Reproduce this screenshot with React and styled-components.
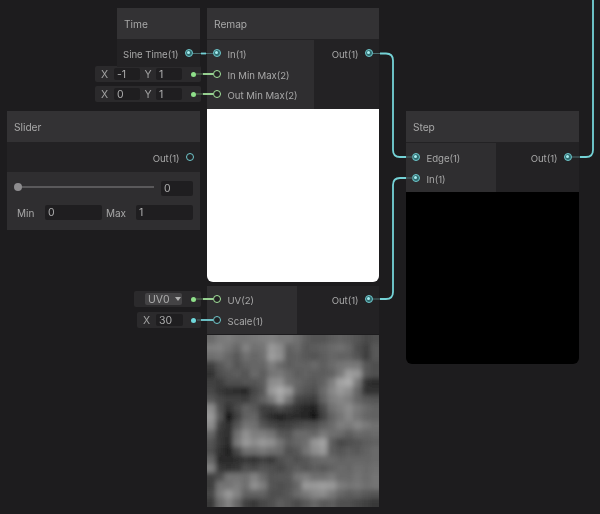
import React from "react";
import styled, { createGlobalStyle } from "styled-components";

const Global = createGlobalStyle`
  html, body { margin: 0; padding: 0; background: #1d1c1e; }
  body { font-family: Inter, "Liberation Sans", sans-serif; }
`;
const Canvas = styled.div`
  position: relative;
  width: 600px;
  height: 514px;
  overflow: hidden;
  background: #1d1c1e;
  filter: blur(0.35px);
`;
const Node = styled.div`
  position: absolute;
  left: ${(p) => p.$x}px;
  top: ${(p) => p.$y}px;
  width: ${(p) => p.$w}px;
  display: flex;
  flex-direction: column;
  color: #a8a8a8;
  font-size: 9.6px;
  letter-spacing: -0.03px;
  white-space: nowrap;
`;
const Title = styled.div`
  height: 31px;
  line-height: 33px;
  padding-left: 7px;
  font-size: 10.2px;
  background: #333234;
  border-bottom: 1px solid #232224;
`;
const Ports = styled.div`
  display: flex;
  height: ${(p) => p.$h}px;
  background: #232224;
`;
const PortColumn = styled.div`
  width: ${(p) => p.$w}px;
  padding-top: ${(p) => p.$top || 3}px;
  box-sizing: border-box;
  background: ${(p) => (p.$input ? "#2f2e30" : "#232224")};
  display: flex;
  flex-direction: column;
  align-items: ${(p) => (p.$input ? "flex-start" : "flex-end")};
`;
const PortRow = styled.div`
  height: 20.5px;
  display: flex;
  align-items: center;
  gap: 6.5px;
  padding: ${(p) => (p.$input ? "0 0 0 6px" : `0 ${p.$pad || 6}px 0 0`)};
`;
const PortLabel = styled.span`
  margin-top: 3px;
`;
const Port = styled.span`
  width: 8px;
  height: 8px;
  border-radius: 50%;
  box-sizing: border-box;
  flex: none;
  border: 1.5px solid ${(p) => p.$color};
  background: ${(p) => (p.$open ? "#222123" : "#2f6a6e")};
  position: relative;
  &::after {
    content: "";
    display: ${(p) => (p.$open ? "none" : "block")};
    position: absolute;
    left: 1px;
    top: 1px;
    width: 3px;
    height: 3px;
    border-radius: 50%;
    background: #a6eef0;
  }
`;
const Preview = styled.div`
  height: ${(p) => p.$h}px;
  background: ${(p) => p.$bg};
  border-radius: 0 0 6px 6px;
`;
const NoiseFrame = styled.div`
  margin-top: 1px;
  height: 172px;
  overflow: hidden;
`;
const InlineControl = styled.div`
  position: absolute;
  left: ${(p) => p.$x}px;
  top: ${(p) => p.$y}px;
  width: ${(p) => p.$w}px;
  height: 16px;
  background: #2b2a2c;
  border-radius: 2px;
  display: flex;
  align-items: center;
  font-size: 10.5px;
  color: #a0a0a0;
`;
const Axis = styled.span`
  width: ${(p) => p.$w}px;
  text-align: ${(p) => p.$align || "center"};
  padding-left: ${(p) => p.$indent || 0}px;
  box-sizing: border-box;
  flex: none;
`;
const Field = styled.span`
  width: ${(p) => p.$w}px;
  height: ${(p) => p.$h || 12}px;
  line-height: ${(p) => (p.$h || 12) + 1}px;
  padding-left: 3px;
  box-sizing: border-box;
  background: #1f1e20;
  border-radius: 2px;
  flex: none;
  font-size: 10.5px;
  color: #acacac;
`;
const Dot = styled.span`
  position: absolute;
  right: 5px;
  top: 5.5px;
  width: 5px;
  height: 5px;
  border-radius: 50%;
  background: ${(p) => p.$color};
`;
const Dropdown = styled.span`
  margin-left: 11px;
  width: 37px;
  height: 12px;
  padding-left: 3px;
  box-sizing: border-box;
  background: #444345;
  border-radius: 2px;
  display: flex;
  align-items: center;
  gap: 5px;
  color: #acacac;
`;
const Caret = styled.span`
  width: 0;
  height: 0;
  border-left: 3px solid transparent;
  border-right: 3px solid transparent;
  border-top: 4px solid #b0b0b0;
`;
const SliderBody = styled.div`
  background: #2f2e30;
  height: 58px;
  padding: 9px 7px 0 10px;
  box-sizing: border-box;
  display: flex;
  flex-direction: column;
  gap: 9px;
`;
const SliderRow = styled.div`
  display: flex;
  align-items: center;
  height: 15px;
  font-size: 10px;
`;
const Track = styled.div`
  position: relative;
  width: 136px;
  height: 2px;
  background: #5a595b;
  margin: 0 7px 3px 1px;
`;
const Thumb = styled.span`
  position: absolute;
  left: -4px;
  top: -3px;
  width: 8px;
  height: 8px;
  border-radius: 50%;
  background: #8e8d8f;
`;
const Wires = styled.svg`
  position: absolute;
  inset: 0;
  pointer-events: none;
`;

const NOISE = [
  [115, 130, 135, 125, 125, 130, 135, 140, 130, 130, 120, 100, 90, 90, 100, 105, 100, 90, 80, 85],
  [135, 140, 125, 110, 140, 120, 125, 165, 150, 105, 115, 95, 100, 105, 115, 120, 110, 85, 70, 95],
  [120, 125, 110, 95, 120, 110, 120, 170, 155, 100, 105, 95, 90, 100, 110, 105, 105, 90, 65, 95],
  [70, 95, 110, 90, 105, 110, 110, 135, 115, 100, 105, 105, 115, 100, 115, 125, 130, 130, 95, 85],
  [55, 85, 95, 100, 90, 115, 100, 125, 130, 115, 100, 105, 100, 100, 105, 130, 170, 165, 95, 85],
  [70, 65, 85, 85, 90, 90, 100, 150, 155, 120, 110, 100, 95, 105, 135, 175, 185, 130, 55, 45],
  [75, 60, 50, 45, 40, 75, 95, 165, 185, 165, 105, 90, 85, 115, 145, 165, 150, 110, 55, 55],
  [95, 75, 70, 70, 65, 85, 105, 130, 170, 125, 75, 70, 65, 105, 135, 145, 135, 110, 95, 90],
  [150, 85, 55, 80, 105, 95, 70, 70, 85, 70, 55, 40, 35, 80, 120, 135, 150, 130, 115, 105],
  [165, 95, 25, 70, 105, 110, 70, 45, 35, 45, 45, 40, 25, 70, 105, 125, 145, 125, 110, 105],
  [150, 70, 50, 90, 125, 120, 90, 75, 65, 70, 80, 85, 85, 100, 115, 135, 130, 145, 130, 120],
  [110, 60, 50, 120, 155, 135, 135, 125, 95, 90, 115, 115, 110, 130, 120, 115, 100, 115, 110, 115],
  [90, 60, 45, 130, 165, 150, 165, 155, 125, 100, 110, 120, 160, 175, 100, 75, 85, 90, 100, 105],
  [85, 55, 35, 80, 120, 120, 130, 120, 115, 85, 95, 125, 150, 165, 100, 90, 100, 95, 105, 115],
  [110, 45, 45, 50, 60, 55, 70, 60, 85, 95, 85, 95, 110, 115, 115, 105, 110, 110, 110, 115],
  [140, 60, 55, 60, 85, 80, 90, 85, 75, 90, 100, 90, 100, 95, 105, 115, 110, 120, 115, 120],
  [70, 85, 125, 125, 120, 140, 115, 90, 95, 95, 125, 135, 120, 120, 130, 115, 115, 125, 115, 125],
  [65, 125, 125, 135, 120, 155, 135, 90, 85, 90, 110, 165, 165, 170, 165, 135, 125, 130, 120, 125],
  [75, 135, 165, 140, 105, 105, 105, 85, 85, 95, 115, 130, 145, 150, 130, 110, 100, 105, 95, 90],
  [60, 115, 140, 110, 70, 60, 75, 85, 100, 90, 80, 95, 110, 95, 100, 85, 85, 75, 70, 60],
];

function NoisePicture() {
  const n = NOISE.length;
  const cell = 172 / n;
  const cells = [];
  for (let r = -3; r < n + 3; r++) {
    for (let c = -3; c < n + 3; c++) {
      const row = NOISE[Math.min(n - 1, Math.max(0, r))];
      const v = Math.round(row[Math.min(n - 1, Math.max(0, c))] * 0.93);
      cells.push(
        <rect
          key={`${r}-${c}`}
          x={c * cell}
          y={r * cell}
          width={cell + 0.5}
          height={cell + 0.5}
          fill={`rgb(${v},${v},${v})`}
        />
      );
    }
  }
  return (
    <svg width="172" height="172" viewBox="0 0 172 172" style={{ display: "block" }}>
      <defs>
        <filter id="soft" filterUnits="userSpaceOnUse" x="-40" y="-40" width="252" height="252">
          <feGaussianBlur stdDeviation="2.8" />
        </filter>
      </defs>
      <g filter="url(#soft)">{cells}</g>
    </svg>
  );
}

function InPort({ label, color = "#6fc8cc", open }) {
  return (
    <PortRow $input>
      <Port $color={color} $open={open} />
      <PortLabel>{label}</PortLabel>
    </PortRow>
  );
}
function OutPort({ label, open, pad }) {
  return (
    <PortRow $pad={pad}>
      <PortLabel>{label}</PortLabel>
      <Port $color="#6fc8cc" $open={open} />
    </PortRow>
  );
}

export default function App() {
  return (
    <Canvas>
      <Global />
      <InlineControl $x={95} $y={66} $w={106}>
        <Axis $w={19}>X</Axis>
        <Field $w={26}>-1</Field>
        <Axis $w={16}>Y</Axis>
        <Field $w={26}>1</Field>
        <Dot $color="#8fe08a" />
      </InlineControl>
      <InlineControl $x={95} $y={86} $w={106}>
        <Axis $w={19}>X</Axis>
        <Field $w={26}>0</Field>
        <Axis $w={16}>Y</Axis>
        <Field $w={26}>1</Field>
        <Dot $color="#8fe08a" />
      </InlineControl>
      <InlineControl $x={134} $y={291} $w={67}>
        <Dropdown>
          UV0 <Caret />
        </Dropdown>
        <Dot $color="#8fe08a" />
      </InlineControl>
      <InlineControl $x={137} $y={312} $w={64}>
        <Axis $w={19}>X</Axis>
        <Field $w={27}>30</Field>
        <Dot $color="#6fd8dc" />
      </InlineControl>

      <Node $x={117} $y={8} $w={83}>
        <Title>Time</Title>
        <Ports $h={27}>
          <PortColumn $w={83}>
            <OutPort label="Sine Time(1)" pad={7} />
          </PortColumn>
        </Ports>
      </Node>

      <Node $x={207} $y={8} $w={172}>
        <Title>Remap</Title>
        <Ports $h={69}>
          <PortColumn $input $w={107}>
            <InPort label="In(1)" />
            <InPort label="In Min Max(2)" color="#a4e59c" open />
            <InPort label="Out Min Max(2)" color="#a4e59c" open />
          </PortColumn>
          <PortColumn $w={65}>
            <OutPort label="Out(1)" />
          </PortColumn>
        </Ports>
        <Preview $h={173} $bg="#fff" />
      </Node>

      <Node $x={7} $y={111} $w={193}>
        <Title>Slider</Title>
        <Ports $h={29}>
          <PortColumn $w={193} $top={4}>
            <OutPort label="Out(1)" open />
          </PortColumn>
        </Ports>
        <SliderBody>
          <SliderRow>
            <Track>
              <Thumb />
            </Track>
            <Field $w={32} $h={15}>0</Field>
          </SliderRow>
          <SliderRow>
            <Axis $w={28} $align="left">Min</Axis>
            <Field $w={57} $h={15}>0</Field>
            <Axis $w={34} $align="left" $indent={4}>Max</Axis>
            <Field $w={57} $h={15}>1</Field>
          </SliderRow>
        </SliderBody>
      </Node>

      <Node $x={207} $y={286} $w={172}>
        <Ports $h={48}>
          <PortColumn $input $w={90}>
            <InPort label="UV(2)" color="#a4e59c" open />
            <InPort label="Scale(1)" open />
          </PortColumn>
          <PortColumn $w={82}>
            <OutPort label="Out(1)" />
          </PortColumn>
        </Ports>
        <NoiseFrame>
          <NoisePicture />
        </NoiseFrame>
      </Node>

      <Node $x={406} $y={111} $w={173}>
        <Title>Step</Title>
        <Ports $h={49}>
          <PortColumn $input $w={90} $top={4}>
            <InPort label="Edge(1)" />
            <InPort label="In(1)" />
          </PortColumn>
          <PortColumn $w={83} $top={4}>
            <OutPort label="Out(1)" pad={7} />
          </PortColumn>
        </Ports>
        <Preview $h={172} $bg="#000" />
      </Node>

      <Wires width="600" height="514" viewBox="0 0 600 514" fill="none">
        <g stroke="#74d2d6" strokeWidth="1.8">
          <path d="M201 53.5H206" />
          <path d="M380 53.5H386Q393 53.5 393 60.5V150Q393 157 400 157H406" />
          <path d="M380 299H386Q393 299 393 292V185Q393 178 400 178H406" />
          <path d="M580 157H586Q593 157 593 150V0" />
          <path d="M201 320H213" />
        </g>
        <g stroke="#4b6e70" strokeWidth="1">
          <path d="M193 53.5H201M206 53.5H213" />
          <path d="M373 53.5H380M373 299H380M406 157H413M406 178H413M572 157H580" />
          <path d="M197 320H201" />
        </g>
        <g stroke="#a4e59c" strokeWidth="1.8">
          <path d="M203 74H213" />
          <path d="M203 94H213" />
          <path d="M203 299H213" />
        </g>
        <g stroke="#5a7a58" strokeWidth="1">
          <path d="M196 74H203M196 94H203M196 299H203" />
        </g>
      </Wires>
    </Canvas>
  );
}
